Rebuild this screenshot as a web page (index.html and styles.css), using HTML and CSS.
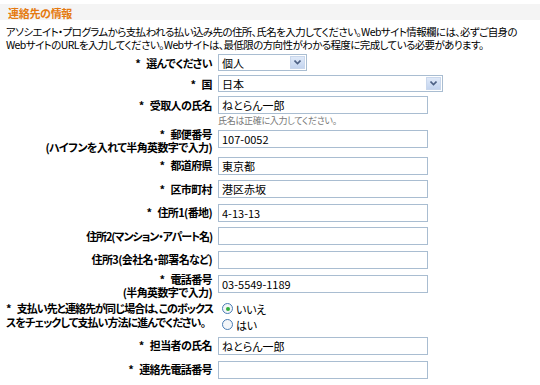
FILE: index.html
```html
<!DOCTYPE html>
<html lang="ja">
<head>
  <meta charset="UTF-8">
  <title>連絡先の情報</title>
  <link rel="stylesheet" href="styles.css">
</head>
<body>
  <div class="section-title">連絡先の情報</div>
  <p class="intro">アソシエイト・プログラムから支払われる払い込み先の住所、氏名を入力してください。Webサイト情報欄には、必ずご自身の<br>WebサイトのURLを入力してください。Webサイトは、最低限の方向性がわかる程度に完成している必要があります。</p>

  <table class="contact-form">
    <colgroup>
      <col class="label-col">
      <col>
    </colgroup>
    <tr class="select-row">
      <th><span class="req">*</span>選んでください</th>
      <td>
        <div class="select-box small">
          <select><option>個人</option></select>
          <span class="drop-btn"><svg width="7" height="5" viewBox="0 0 7 5"><path d="M0.5 0.5 L3.5 3.5 L6.5 0.5" fill="none" stroke="#4d6185" stroke-width="1.6"/></svg></span>
        </div>
      </td>
    </tr>
    <tr class="select-row">
      <th><span class="req">*</span>国</th>
      <td>
        <div class="select-box wide">
          <select><option>日本</option></select>
          <span class="drop-btn"><svg width="7" height="5" viewBox="0 0 7 5"><path d="M0.5 0.5 L3.5 3.5 L6.5 0.5" fill="none" stroke="#4d6185" stroke-width="1.6"/></svg></span>
        </div>
      </td>
    </tr>
    <tr>
      <th><span class="req">*</span>受取人の氏名</th>
      <td>
        <input type="text" value="ねとらん一郎">
        <div class="hint">氏名は正確に入力してください。</div>
      </td>
    </tr>
    <tr class="tall">
      <th><span class="req">*</span>郵便番号<br>(ハイフンを入れて半角英数字で入力)</th>
      <td><input type="text" value="107-0052"></td>
    </tr>
    <tr>
      <th><span class="req">*</span>都道府県</th>
      <td><input type="text" value="東京都"></td>
    </tr>
    <tr>
      <th><span class="req">*</span>区市町村</th>
      <td><input type="text" value="港区赤坂"></td>
    </tr>
    <tr>
      <th><span class="req">*</span>住所1(番地)</th>
      <td><input type="text" value="4-13-13"></td>
    </tr>
    <tr>
      <th class="kana">住所2(マンション・アパート名)</th>
      <td><input type="text" value=""></td>
    </tr>
    <tr>
      <th>住所3(会社名・部署名など)</th>
      <td><input type="text" value=""></td>
    </tr>
    <tr class="tall">
      <th><span class="req">*</span>電話番号<br>(半角英数字で入力)</th>
      <td><input type="text" value="03-5549-1189"></td>
    </tr>
    <tr class="radio-field">
      <th class="long"><span class="req">*</span>支払い先と連絡先が同じ場合は、このボックス<br>スをチェックして支払い方法に進んでください。</th>
      <td class="radios">
        <label class="radio-row"><span class="radio checked"></span>いいえ</label>
        <label class="radio-row"><span class="radio"></span>はい</label>
      </td>
    </tr>
    <tr>
      <th><span class="req">*</span>担当者の氏名</th>
      <td><input type="text" value="ねとらん一郎"></td>
    </tr>
    <tr>
      <th><span class="req">*</span>連絡先電話番号</th>
      <td><input type="text" value=""></td>
    </tr>
  </table>
</body>
</html>
```

FILE: styles.css
```css
body {
  font-family: "Noto Sans CJK JP", "Noto Sans", sans-serif;
  font-size: 11px;
  font-feature-settings: "palt";
  margin: 0;
  padding: 0;
  background-color: #fff;
  color: #000;
}
.section-title {
  background: #f4f4f4;
  color: #e57a10;
  font-weight: bold;
  font-size: 11px;
  line-height: 12px;
  height: 16px;
  box-sizing: border-box;
  padding: 3px 8px 0;
  margin-top: 4px;
  letter-spacing: -0.3px;
}
.intro {
  margin: 5px 0 0;
  padding: 0 6px;
  font-size: 10.5px;
  letter-spacing: -0.6px;
  line-height: 13px;
  white-space: nowrap;
}
.contact-form {
  border-collapse: collapse;
  table-layout: fixed;
  width: 440px;
  margin: 0 0 0 2px;
}
.label-col {
  width: 214px;
}
.contact-form th {
  text-align: right;
  vertical-align: top;
  font-weight: bold;
  letter-spacing: -0.6px;
  line-height: 13px;
  padding: 5.5px 4px 0 0;
  white-space: nowrap;
}
.req {
  margin-right: 6px;
}
.contact-form th.kana {
  letter-spacing: -1.1px;
}
.contact-form td {
  vertical-align: top;
  padding: 2px 0 0.6px 2px;
}
.contact-form tr.select-row td {
  padding-bottom: 1px;
}
.contact-form tr.tall th {
  padding-top: 1px;
  line-height: 13px;
}
.contact-form th.long {
  text-align: left;
  padding: 2.5px 0 0 4px;
  line-height: 14px;
  letter-spacing: -0.95px;
}
.contact-form input {
  display: block;
  width: 210px;
  height: 18px;
  box-sizing: border-box;
  border: 1px solid #a9bdd1;
  padding: 1px 3px;
  margin: 1px 0 2px;
  font-family: inherit;
  font-size: 11px;
  font-feature-settings: "palt";
  color: #000;
}
.hint {
  font-size: 9px;
  color: #777;
  line-height: 10px;
  letter-spacing: -0.3px;
}
.select-box {
  display: flex;
  height: 17px;
  box-sizing: border-box;
  border: 1px solid #a9bdd1;
  margin: 1px 0 0;
}
.select-box.small {
  width: 89px;
}
.select-box.wide {
  width: 225px;
}
.select-box select {
  flex: 1;
  appearance: none;
  -webkit-appearance: none;
  border: none;
  background: #fff;
  font-family: inherit;
  font-size: 11px;
  padding: 0 3px;
  color: #000;
  outline: none;
}
.drop-btn {
  width: 15px;
  margin: 1px;
  background: linear-gradient(#dfe9f8, #c3d4ef);
  border: 1px solid #c9d7ec;
  box-sizing: border-box;
  display: flex;
  align-items: center;
  justify-content: center;
}
.contact-form td.radios {
  padding: 2px 0 1.4px 2px;
}
.radio-row {
  display: flex;
  align-items: center;
  line-height: 16px;
  height: 16px;
  letter-spacing: -0.3px;
}
.radio {
  width: 11px;
  height: 11px;
  border: 1px solid #4a7db5;
  border-radius: 50%;
  box-sizing: border-box;
  margin: 0 3px 0 4px;
  background: #f4f6f8;
  position: relative;
}
.radio.checked::after {
  content: '';
  position: absolute;
  left: 2.5px;
  top: 2.5px;
  width: 4px;
  height: 4px;
  border-radius: 50%;
  background: #2fae3c;
}
```
